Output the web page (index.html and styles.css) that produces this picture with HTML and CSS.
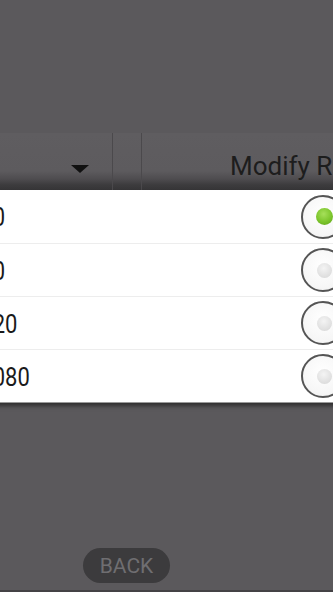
FILE: index.html
```html
<!DOCTYPE html>
<html lang="en">
<head>
    <meta charset="UTF-8">
    <meta name="viewport" content="width=device-width, initial-scale=1.0">
    <title>Resolution</title>
    <link rel="stylesheet" href="styles.css">
</head>
<body>
    <div class="screen">
        <div class="toolbar">
            <div class="dropdown">
                <span class="caret"></span>
            </div>
            <div class="gap"></div>
            <div class="modify-btn">Modify Resolution</div>
        </div>

        <div class="dialog">
            <div class="option">
                <span class="label">320x240</span>
                <span class="radio checked"></span>
            </div>
            <div class="option">
                <span class="label">640x480</span>
                <span class="radio"></span>
            </div>
            <div class="option">
                <span class="label">1280x720</span>
                <span class="radio"></span>
            </div>
            <div class="option">
                <span class="label">1920x1080</span>
                <span class="radio"></span>
            </div>
        </div>

        <div class="footer">
            <button class="back-btn">BACK</button>
        </div>
    </div>
</body>
</html>
```

FILE: styles.css
```css
html, body {
    margin: 0;
    padding: 0;
    background: #5b595c;
    overflow: hidden;
}

body {
    font-family: Roboto, "Noto Sans", "Liberation Sans", sans-serif;
    color: #1b1b1b;
}

.screen {
    width: 333px;
    height: 592px;
    display: flex;
    flex-direction: column;
    overflow: hidden;
    border-bottom: 2px solid #444245;
    box-sizing: border-box;
}

.toolbar {
    margin-top: 133px;
    height: 57px;
    display: flex;
    background: linear-gradient(to bottom, #5f5d60 0, #5d5b5e 38px, #4e4c4f 46px, #3c3b3d 52px, #373638 57px);
    flex-shrink: 0;
}

.dropdown {
    width: 112px;
    border-right: 1px solid #4b494c;
    position: relative;
}

.caret {
    position: absolute;
    left: 71px;
    top: 32px;
    width: 0;
    height: 0;
    border-left: 9px solid transparent;
    border-right: 9px solid transparent;
    border-top: 8px solid #111;
}

.gap {
    width: 28px;
    border-right: 1px solid #4b494c;
}

.modify-btn {
    flex: 1;
    padding: 18px 0 0 88px;
    font-size: 26px;
    white-space: nowrap;
    overflow: hidden;
    color: #1d1d1d;
}

.dialog {
    margin-left: -125px;
    width: 480px;
    background: #fff;
    flex-shrink: 0;
    border-bottom: 1px solid #9a9a9a;
    box-shadow: 0 3px 4px rgba(30, 30, 30, 0.7);
}

.option {
    height: 53px;
    box-sizing: border-box;
    display: flex;
    align-items: center;
    padding-left: 45px;
    border-top: 1px solid #ededed;
}

.option:first-child {
    border-top: none;
}

.label {
    flex: 1;
    display: inline-block;
    font-size: 22px;
    color: #1a1a1a;
    transform: scaleY(1.2);
}

.radio {
    width: 40px;
    height: 40px;
    margin-right: 10px;
    border: 2px solid #555;
    border-radius: 50%;
    background: radial-gradient(circle at 50% 40%, #ffffff 0, #f6f6f6 70%, #e8e8e8 100%);
    display: flex;
    align-items: center;
    justify-content: center;
    flex-shrink: 0;
}

.radio::after {
    content: "";
    width: 15px;
    height: 15px;
    margin-left: 3px;
    border-radius: 50%;
    background: radial-gradient(circle at 45% 35%, #f4f4f4 0, #dedede 70%, #cfcfcf 100%);
}

.radio.checked::after {
    width: 17px;
    height: 17px;
    background: radial-gradient(circle at 45% 35%, #a6e05a 0, #7cc52c 55%, #5a9e18 100%);
}

.footer {
    margin-top: auto;
    padding-bottom: 7px;
    padding-left: 83px;
}

.back-btn {
    width: 87px;
    height: 35px;
    border: none;
    border-radius: 18px;
    background: #3c3b3d;
    color: #6f6e71;
    font-family: Roboto, "Noto Sans", sans-serif;
    font-size: 21px;
    padding: 0;
}
```
